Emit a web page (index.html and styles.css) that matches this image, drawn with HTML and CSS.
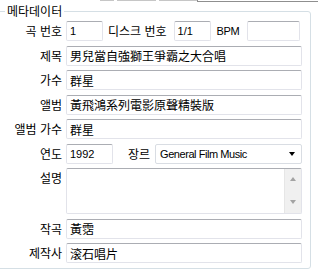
FILE: index.html
```html
<!DOCTYPE html>
<html lang="ko">
<head>
<meta charset="utf-8">
<title>메타데이터</title>
<link rel="stylesheet" href="styles.css">
</head>
<body>
<div class="topbar">
  <div class="tabs"><span class="tab t1"></span><span class="tab t2"></span><span class="tab t3"></span></div>
  <div class="rule"></div>
</div>
<fieldset class="group">
  <legend class="legend">메타데이터</legend>
  <div class="form">
    <label class="lbl">곡 번호</label>
    <div class="line">
      <input class="tb latin w-track" value="1">
      <span class="lbl disc">디스크 번호</span>
      <input class="tb latin w-track" value="1/1">
      <span class="lbl bpm">BPM</span>
      <input class="tb latin w-bpm" value="">
    </div>

    <label class="lbl">제목</label>
    <input class="tb" value="男兒當自強獅王爭霸之大合唱">

    <label class="lbl">가수</label>
    <input class="tb" value="群星">

    <label class="lbl">앨범</label>
    <input class="tb" value="黃飛鴻系列電影原聲精裝版">

    <label class="lbl">앨범 가수</label>
    <input class="tb" value="群星">

    <label class="lbl">연도</label>
    <div class="line">
      <input class="tb latin w-year" value="1992">
      <span class="lbl genre">장르</span>
      <div class="combo"><span class="combo-text">General Film Music</span><span class="combo-arrow"></span></div>
    </div>

    <label class="lbl top">설명</label>
    <div class="memo">
      <textarea class="memo-text"></textarea>
      <div class="scroll"><span class="arr up"></span><span class="arr down"></span></div>
    </div>

    <label class="lbl">작곡</label>
    <input class="tb" value="黃霑">

    <label class="lbl">제작사</label>
    <input class="tb" value="滚石唱片">
  </div>
</fieldset>
</body>
</html>
```
FILE: styles.css
```css
* { box-sizing: border-box; }
html, body { margin: 0; padding: 0; background: #fff; }
body {
  width: 318px;
  height: 274px;
  overflow: hidden;
  font-family: "Noto Sans CJK KR", "Liberation Sans", sans-serif;
  font-size: 12px;
  color: #000;
}

.topbar { display: flex; height: 2px; }
.tabs { display: flex; width: 197px; padding-left: 100px; height: 1px; }
.tab { height: 1px; background: #c6c6c6; }
.t1 { width: 14px; margin-right: 3px; }
.t2 { width: 39px; margin-right: 3px; }
.t3 { width: 38px; }
.rule { flex: 1; height: 2px; border-left: 1px solid #8f8f8f; border-bottom: 1px solid #8f8f8f; }

.group {
  margin: 1px 0 0 -3px;
  width: 314px;
  padding: 2px 8px 5px 0;
  border: 1px solid #d5dfe5;
  border-radius: 3px;
}
.legend {
  margin-left: 7px;
  padding: 0 2px;
  line-height: 16px;
  font-size: 12px;
}

.form {
  display: grid;
  grid-template-columns: 64px 1fr;
  column-gap: 4px;
  row-gap: 4.5px;
}
.lbl {
  line-height: 20px;
  white-space: nowrap;
  text-align: right;
}
.form > .lbl { justify-self: end; align-self: center; }
.form > .lbl.top { align-self: start; }

.line { display: flex; align-items: center; }

.tb {
  display: block;
  width: 100%;
  height: 20px;
  margin: 0;
  padding: 0 3px;
  border: 1px solid #e2e3ea;
  border-top-color: #abadb3;
  border-radius: 2px;
  background: #fff;
  font-family: "Noto Sans CJK KR", sans-serif;
  font-size: 12px;
  color: #000;
  outline: none;
}
.tb.latin { font-family: "Liberation Sans", sans-serif; font-size: 11px; }
.w-track { width: 37px; flex: none; }
.w-bpm { width: 53px; flex: none; }
.w-year { width: 47px; flex: none; }

.disc { margin: 0 7px 0 5px; }
.bpm {
  margin: 0 8px 0 6px;
  font-family: "Liberation Sans", sans-serif;
  font-size: 11px;
  letter-spacing: -0.4px;
}
.genre { margin: 0 5px 0 15px; }

.combo {
  flex: 1;
  display: flex;
  align-items: center;
  height: 20px;
  padding: 0 4px 0 4px;
  border: 1px solid #d9dde3;
  border-radius: 2px;
  background: #fff;
}
.combo-text {
  flex: 1;
  font-family: "Liberation Sans", sans-serif;
  font-size: 11px;
  letter-spacing: -0.45px;
}
.combo-arrow {
  width: 0;
  height: 0;
  margin-right: 2px;
  border-left: 3.5px solid transparent;
  border-right: 3.5px solid transparent;
  border-top: 4px solid #000;
}

.memo {
  display: flex;
  height: 46px;
  border: 1px solid #e2e3ea;
  border-top-color: #abadb3;
  border-radius: 2px;
  background: #fff;
}
.memo-text {
  flex: 1;
  min-width: 0;
  border: none;
  outline: none;
  resize: none;
  padding: 2px 3px;
  font-family: "Noto Sans CJK KR", sans-serif;
  font-size: 12px;
  background: transparent;
}
.scroll {
  width: 17px;
  display: flex;
  flex-direction: column;
  justify-content: space-between;
  align-items: center;
  padding: 8px 0 9px;
  background: #f0f0f0;
  border-left: 1px solid #e6e6e6;
}
.arr { width: 0; height: 0; border-left: 3.5px solid transparent; border-right: 3.5px solid transparent; }
.arr.up { border-bottom: 4px solid #a3a3a3; }
.arr.down { border-top: 4px solid #a3a3a3; }
```
